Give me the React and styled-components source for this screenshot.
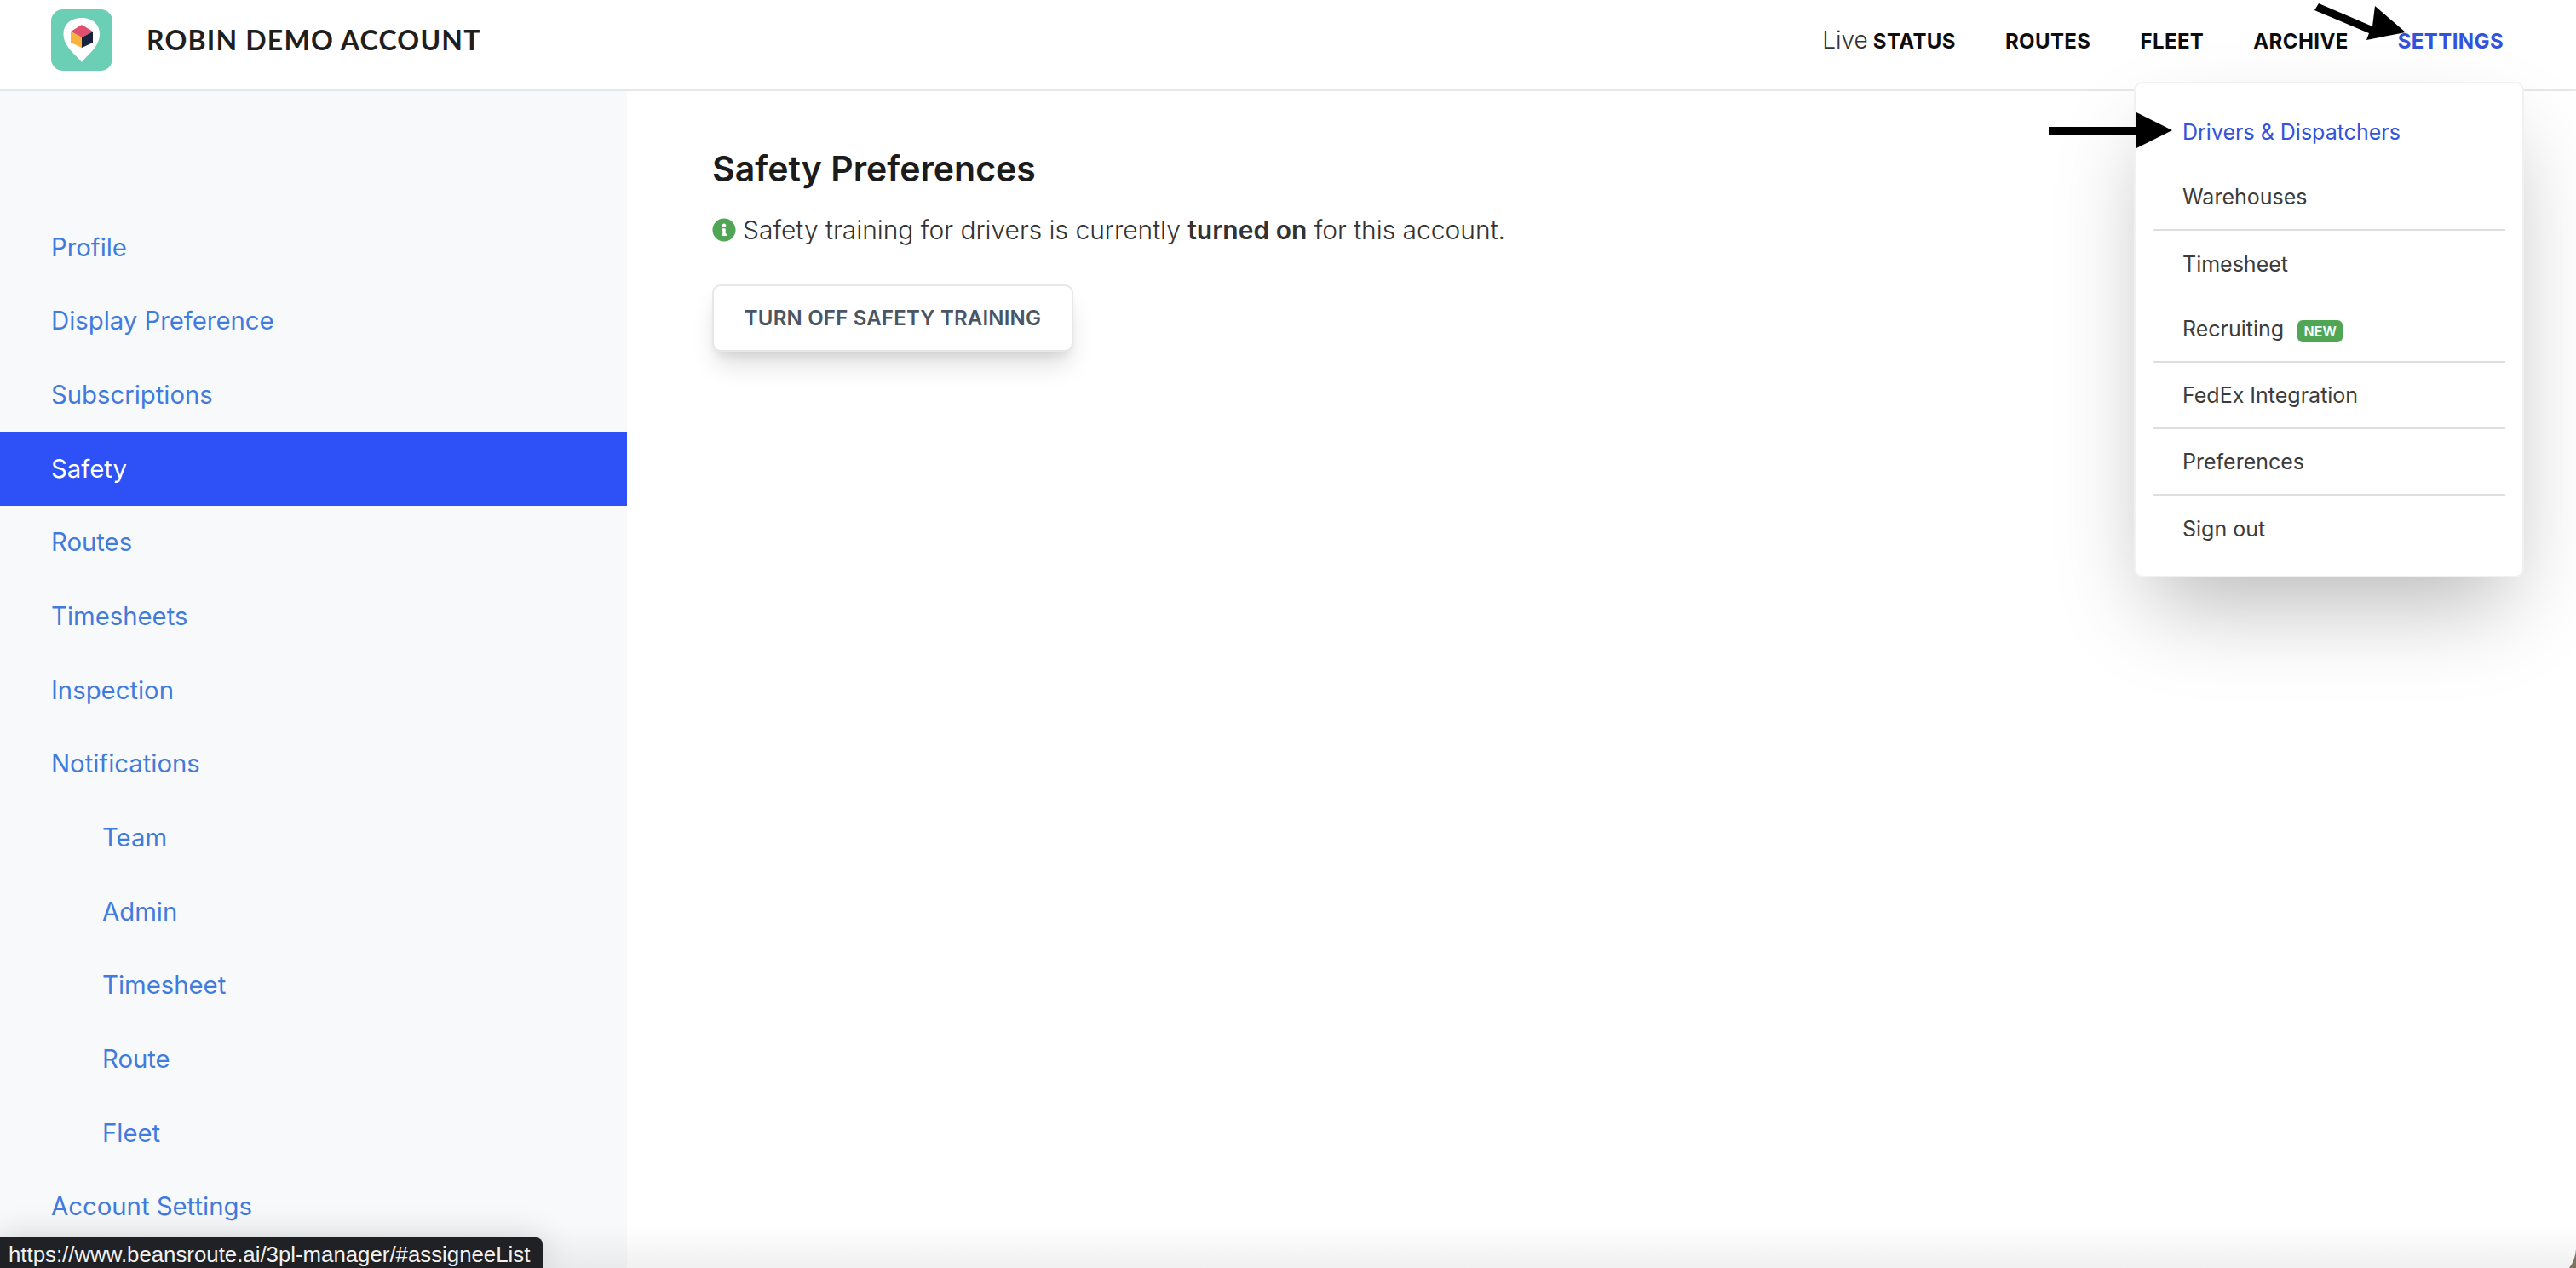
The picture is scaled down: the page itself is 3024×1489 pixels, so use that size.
import React from 'react';
import styled, { createGlobalStyle } from 'styled-components';
import { FaInfoCircle } from 'react-icons/fa';

const GlobalStyle = createGlobalStyle`
  html, body {
    margin: 0;
    height: 100%;
    overflow: hidden;
    background: #fff;
    font-family: Inter, "Noto Sans", sans-serif;
  }
  * {
    box-sizing: border-box;
  }
`;

const Page = styled.div`
  position: relative;
  display: flex;
  flex-direction: column;
  height: 1489px;
  overflow: hidden;
`;

const Header = styled.header`
  display: flex;
  align-items: center;
  justify-content: space-between;
  flex: none;
  height: 107px;
  padding: 0 85px 12px 60px;
  border-bottom: 2px solid #e6e7e8;
  background: #fff;
`;

const Brand = styled.div`
  display: flex;
  align-items: center;
  gap: 40px;
`;

const BrandName = styled.div`
  font-family: Lato, sans-serif;
  font-size: 32px;
  font-weight: 700;
  letter-spacing: 1.2px;
  color: #1f1f1f;
  white-space: nowrap;
`;

const Nav = styled.nav`
  display: flex;
  align-items: baseline;
  gap: 58px;
`;

const NavLink = styled.a`
  font-size: 24px;
  font-weight: 700;
  letter-spacing: 0.4px;
  white-space: nowrap;
  color: ${props => (props.$active ? '#3353dc' : '#0d0d0d')};
`;

const NavLight = styled.span`
  font-size: 28px;
  font-weight: 300;
  letter-spacing: 0;
  color: #333;
  margin-right: 6px;
`;

const Body = styled.div`
  display: flex;
  flex: 1;
  min-height: 0;
`;

const Sidebar = styled.aside`
  flex: none;
  width: 736px;
  padding-top: 140px;
  background: #f8f9fb;
`;

const SideItem = styled.a`
  display: flex;
  align-items: center;
  height: 86.67px;
  padding-left: ${props => (props.$nested ? '120px' : '60px')};
  font-size: 29.3px;
  font-weight: 400;
  color: ${props => (props.$active ? '#fff' : '#3f7cdd')};
  background: ${props => (props.$active ? '#2e50f7' : 'transparent')};
`;

const Main = styled.main`
  flex: 1;
  padding: 61px 0 0 100px;
`;

const Title = styled.h1`
  margin: 0;
  font-size: 41px;
  line-height: 60px;
  font-weight: 600;
  color: #1c1c1c;
`;

const Notice = styled.p`
  display: flex;
  align-items: center;
  gap: 8px;
  margin: 20px 0 0;
  font-size: 30px;
  line-height: 44px;
  font-weight: 300;
  letter-spacing: -0.02px;
  color: #333;
  white-space: pre;

  strong {
    font-weight: 600;
  }
`;

const Button = styled.button`
  display: block;
  width: 424px;
  height: 79px;
  margin-top: 42px;
  padding: 0;
  font-family: inherit;
  font-size: 24px;
  font-weight: 600;
  letter-spacing: 0.2px;
  color: #4b5563;
  background: #fff;
  border: 2px solid #e5e7eb;
  border-radius: 10px;
  box-shadow: 0 20px 30px -6px rgba(0, 0, 0, 0.14), 0 8px 12px -4px rgba(0, 0, 0, 0.08);
`;

const Menu = styled.div`
  position: absolute;
  top: 96px;
  left: 2505px;
  width: 458px;
  height: 582px;
  padding: 18px 20px;
  background: #fff;
  border: 2px solid #f1f1f2;
  border-radius: 10px;
  box-shadow: 0 50px 100px -20px rgba(0, 0, 0, 0.28);
`;

const MenuItem = styled.a`
  display: flex;
  align-items: center;
  gap: 16px;
  height: ${props => (props.$divided ? '78px' : '77px')};
  padding-left: 35px;
  font-size: 25px;
  font-weight: 400;
  color: ${props => (props.$active ? '#3353dc' : '#3c3c3c')};
  border-bottom: ${props => (props.$divided ? '2px solid #dfdfdf' : 'none')};
`;

const Badge = styled.span`
  display: inline-flex;
  align-items: center;
  justify-content: center;
  width: 53px;
  height: 26px;
  margin-top: 5px;
  font-size: 16px;
  font-weight: 600;
  color: #fff;
  background: #50a654;
  border-radius: 6px;
`;

const BottomFade = styled.div`
  position: absolute;
  left: 0;
  right: 0;
  bottom: 0;
  height: 50px;
  background: linear-gradient(to bottom, rgba(0, 0, 0, 0), rgba(0, 0, 0, 0.06));
  pointer-events: none;
`;

const StatusTip = styled.div`
  position: absolute;
  left: 0;
  bottom: 0;
  width: 637px;
  height: 36px;
  padding: 2px 0 0 10px;
  font-family: "Liberation Sans", Arial, sans-serif;
  font-size: 25.8px;
  line-height: 36px;
  color: #f1f1f1;
  white-space: nowrap;
  background: #202124;
  border-top-right-radius: 8px;
  box-shadow: 0 0 40px rgba(0, 0, 0, 0.16);
`;

const ArrowLayer = styled.svg`
  position: absolute;
  top: 0;
  left: 0;
  pointer-events: none;
`;

const WindowCorner = styled.svg`
  position: absolute;
  right: 0;
  bottom: 0;
`;

const Logo = () => (
  <svg width="72" height="72" viewBox="0 0 72 72">
    <rect width="72" height="72" rx="14" fill="#6bcfb6" />
    <path d="M36 62 C30 54 14.5 44 14.5 29 C14.5 17 24 10 36 10 C48 10 57 17 57 29 C57 44 42 54 36 62 Z" fill="#fff" />
    <path d="M36 18 L49 26 L36 33 L23 26 Z" fill="#e0506c" />
    <path d="M23 26 L36 33 L36 45 L23 39 Z" fill="#f9b33c" />
    <path d="M49 26 L36 33 L36 45 L49 39 Z" fill="#16233f" />
  </svg>
);

const Arrows = () => (
  <ArrowLayer width="3024" height="200" viewBox="0 0 3024 200">
    <path d="M2722 4 L2717 12 L2781 39 L2778 47 L2824 38 L2788 7 L2785 31 Z" fill="#000" />
    <path d="M2405 149 L2508 149 L2508 132 L2550 153 L2508 174 L2508 158 L2405 158 Z" fill="#000" />
  </ArrowLayer>
);

const sideItems = [
  { label: 'Profile' },
  { label: 'Display Preference' },
  { label: 'Subscriptions' },
  { label: 'Safety', active: true },
  { label: 'Routes' },
  { label: 'Timesheets' },
  { label: 'Inspection' },
  { label: 'Notifications' },
  { label: 'Team', nested: true },
  { label: 'Admin', nested: true },
  { label: 'Timesheet', nested: true },
  { label: 'Route', nested: true },
  { label: 'Fleet', nested: true },
  { label: 'Account Settings' },
];

const App = () => (
  <Page>
    <GlobalStyle />
    <Header>
      <Brand>
        <Logo />
        <BrandName>ROBIN DEMO ACCOUNT</BrandName>
      </Brand>
      <Nav>
        <NavLink><NavLight>Live</NavLight>STATUS</NavLink>
        <NavLink>ROUTES</NavLink>
        <NavLink>FLEET</NavLink>
        <NavLink>ARCHIVE</NavLink>
        <NavLink $active>SETTINGS</NavLink>
      </Nav>
    </Header>
    <Body>
      <Sidebar>
        {sideItems.map(item => (
          <SideItem key={item.label} $active={item.active} $nested={item.nested}>
            {item.label}
          </SideItem>
        ))}
      </Sidebar>
      <Main>
        <Title>Safety Preferences</Title>
        <Notice>
          <FaInfoCircle size={28} color="#50a654" />
          <span>Safety training for drivers is currently <strong>turned on</strong> for this account.</span>
        </Notice>
        <Button>TURN OFF SAFETY TRAINING</Button>
      </Main>
    </Body>
    <Menu>
      <MenuItem $active>Drivers &amp; Dispatchers</MenuItem>
      <MenuItem $divided>Warehouses</MenuItem>
      <MenuItem>Timesheet</MenuItem>
      <MenuItem $divided>Recruiting <Badge>NEW</Badge></MenuItem>
      <MenuItem $divided>FedEx Integration</MenuItem>
      <MenuItem $divided>Preferences</MenuItem>
      <MenuItem>Sign out</MenuItem>
    </Menu>
    <Arrows />
    <BottomFade />
    <StatusTip>https://www.beansroute.ai/3pl-manager/#assigneeList</StatusTip>
    <WindowCorner width="12" height="22" viewBox="0 0 12 22">
      <path d="M12 0 Q11 13 4 22 L12 22 Z" fill="#7d7365" />
    </WindowCorner>
  </Page>
);

export default App;
